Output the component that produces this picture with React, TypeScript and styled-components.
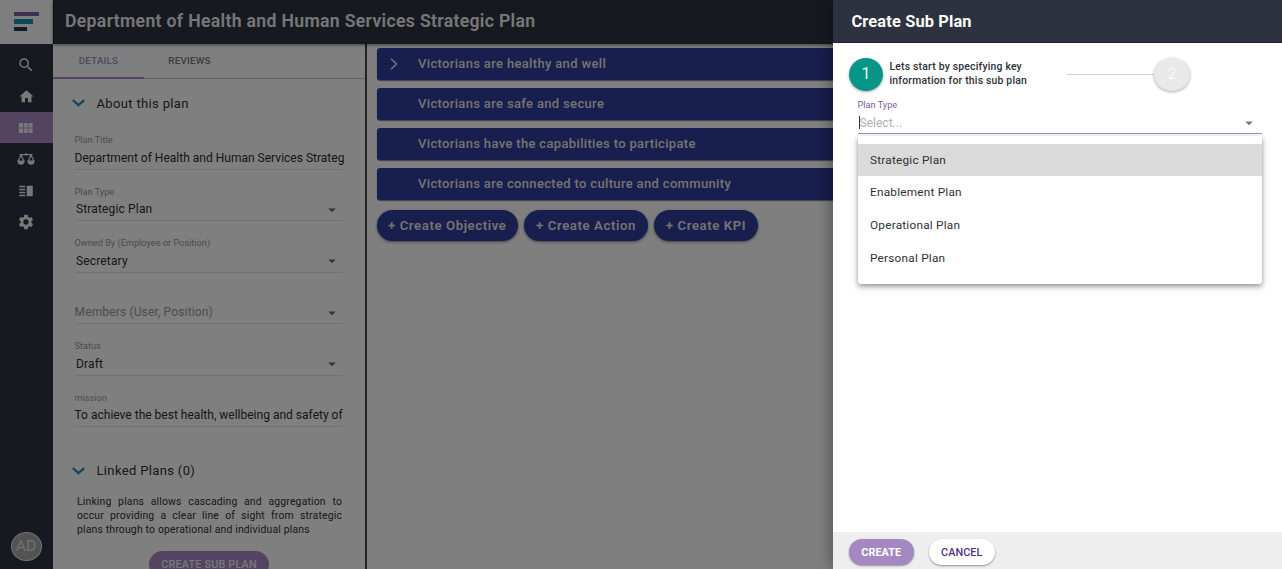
import * as React from 'react';
import { useState } from 'react';
import styled, { createGlobalStyle } from 'styled-components';
import { MdSearch, MdHome, MdSettings, MdVerticalSplit, MdArrowDropDown } from 'react-icons/md';

const GlobalStyle = createGlobalStyle`
  * {
    box-sizing: border-box;
  }
  body {
    margin: 0;
    overflow: hidden;
    font-family: Roboto, "Liberation Sans", sans-serif;
    color: #2f3038;
  }
  button, input {
    font-family: inherit;
  }
`;

const Page = styled.div`
  position: relative;
  display: flex;
  width: 100%;
  height: 100vh;
  overflow: hidden;
  background: #fefefe;
`;

const Sidebar = styled.nav`
  display: flex;
  flex-direction: column;
  flex: none;
  width: 53px;
  background: #2e3342;
`;

const Logo = styled.div`
  display: flex;
  flex-direction: column;
  gap: 3px;
  height: 44px;
  padding: 12px 0 0 14px;
  margin-bottom: 5px;
  background: #fdfdfd;
`;

const LogoBar = styled.span<{ $width: number; $color: string }>`
  width: ${(p) => p.$width}px;
  height: 4.4px;
  background: ${(p) => p.$color};
`;

const NavItem = styled.a<{ $active?: boolean }>`
  display: flex;
  align-items: center;
  justify-content: center;
  height: 31.4px;
  padding: 1px 1px 0 0;
  color: #f0f0f0;
  background: ${(p) => (p.$active ? '#a78bc3' : 'transparent')};
`;

const Avatar = styled.div`
  display: flex;
  align-items: center;
  justify-content: center;
  width: 31px;
  height: 29px;
  margin: auto 0 8.5px 10.5px;
  border: 1px solid #e4e4e4;
  border-radius: 50%;
  background: #a6a6a6;
  color: #e2e2e2;
  font-size: 15.5px;
`;

const Main = styled.div`
  display: flex;
  flex-direction: column;
  flex: 1;
  min-width: 0;
`;

const Header = styled.header`
  z-index: 1;
  flex: none;
  height: 44px;
  padding-left: 11px;
  border-left: 1px solid #1c1f2c;
  background: #2e3342;
  box-shadow: 0 1px 3px rgba(0, 0, 0, 0.5);
  color: #eeeeee;
  font-size: 17.6px;
  font-weight: 600;
  letter-spacing: 0.34px;
  line-height: 43px;
  white-space: nowrap;
`;

const Body = styled.div`
  display: flex;
  flex: 1;
  min-height: 0;
`;

const Details = styled.section`
  flex: none;
  width: 314px;
  overflow: hidden;
  border-right: 2px solid #45464e;
`;

const Tabs = styled.div`
  display: flex;
  height: 35px;
  margin-bottom: 14px;
  border-bottom: 1px solid #c4c4c8;
`;

const Tab = styled.div<{ $active?: boolean }>`
  width: 91px;
  height: 35px;
  border-bottom: 2px solid ${(p) => (p.$active ? '#a78bc3' : 'transparent')};
  color: ${(p) => (p.$active ? '#a78bc3' : '#77777b')};
  font-size: 9.8px;
  font-weight: 500;
  letter-spacing: 0.2px;
  line-height: 34px;
  text-align: center;
`;

const SectionTitle = styled.h2`
  display: flex;
  align-items: center;
  gap: 12px;
  height: 20px;
  margin: 0;
  padding-left: 18.5px;
  font-size: 13px;
  font-weight: 400;
  letter-spacing: 0.35px;
`;

const Form = styled.div`
  padding: 22px 22px 0 21.5px;
  margin-bottom: 16.5px;
`;

const Field = styled.div`
  height: 51.5px;
`;

const FieldLabel = styled.div`
  height: 11px;
  color: #99999c;
  font-size: 9.2px;
  line-height: 10px;
`;

const FieldValue = styled.div<{ $select?: boolean; $muted?: boolean }>`
  display: flex;
  align-items: center;
  justify-content: space-between;
  height: 23.5px;
  padding: 1.5px 2px 0 ${(p) => (p.$select && !p.$muted ? 1.5 : 0)}px;
  border-bottom: 1px solid #e3e3e3;
  color: ${(p) => (p.$muted ? '#99999c' : '#2c2d35')};
  font-size: 12px;
  letter-spacing: ${(p) => (p.$select ? 0.15 : 0.01)}px;
  line-height: 19px;
  white-space: nowrap;
`;

const LinkedText = styled.p`
  margin: 14px 23px 0 24px;
  font-size: 10.4px;
  line-height: 14px;
  letter-spacing: 0.18px;
  text-align: justify;
`;

const SubPlanButton = styled.button`
  display: block;
  width: 120px;
  height: 27px;
  margin: 14px 0 0 96px;
  padding: 0;
  border: none;
  border-radius: 14px;
  background: #a78bc3;
  color: #f0f0f0;
  font-size: 10.8px;
  font-weight: 500;
  letter-spacing: 0.2px;
  white-space: nowrap;
`;

const Objectives = styled.section`
  flex: 1;
  padding: 4px 0 0 9.5px;
`;

const Objective = styled.div`
  display: flex;
  align-items: center;
  height: 32px;
  margin-bottom: 8px;
  padding-bottom: 1px;
  border-radius: 3px;
  background: #303c9b;
  box-shadow: 0 1px 1px rgba(0, 0, 60, 0.5);
  color: #e6e6e6;
  font-size: 13px;
  font-weight: 500;
  letter-spacing: 0.34px;
`;

const Toggle = styled.span`
  display: flex;
  width: 41.5px;
  padding-left: 13px;
`;

const Actions = styled.div`
  display: flex;
  gap: 6px;
  padding-top: 2px;
`;

const ActionButton = styled.button<{ $width: number }>`
  width: ${(p) => p.$width}px;
  height: 31px;
  padding: 0;
  border: none;
  border-radius: 16px;
  background: #303c9b;
  box-shadow: 0 1px 3px rgba(0, 0, 0, 0.5);
  color: #e6e6e6;
  font-size: 13.2px;
  font-weight: 600;
  letter-spacing: 0.58px;
  white-space: nowrap;
`;

const Backdrop = styled.div`
  position: absolute;
  inset: 0;
  z-index: 2;
  background: rgba(0, 0, 0, 0.5);
`;

const Drawer = styled.aside`
  position: absolute;
  top: 0;
  right: 0;
  bottom: 0;
  z-index: 3;
  display: flex;
  flex-direction: column;
  width: 449px;
  background: #fff;
  box-shadow: -2px 0 14px rgba(0, 0, 0, 0.35);
`;

const DrawerHeader = styled.header`
  flex: none;
  height: 43px;
  padding-left: 18.5px;
  border-bottom: 1px solid #1d2147;
  background: #2e323f;
  color: #fff;
  font-size: 16.4px;
  font-weight: 700;
  letter-spacing: 0.14px;
  line-height: 43px;
`;

const DrawerBody = styled.div`
  flex: 1;
  padding: 14.5px 20px 0 16px;
`;

const Steps = styled.div`
  display: flex;
  align-items: center;
  height: 33px;
`;

const StepCircle = styled.div<{ $active?: boolean }>`
  flex: none;
  width: ${(p) => (p.$active ? 34 : 36)}px;
  height: 33px;
  border-radius: 50%;
  background: ${(p) => (p.$active ? '#079588' : '#e9e9e9')};
  box-shadow: 0 1px 3px rgba(0, 0, 0, 0.35);
  color: ${(p) => (p.$active ? '#e8f7f5' : '#f8f8f8')};
  font-size: 16px;
  line-height: 31px;
  text-align: center;
`;

const StepText = styled.div`
  width: 178px;
  padding-left: 6.5px;
  font-size: 10.4px;
  font-weight: 500;
  letter-spacing: 0.2px;
  line-height: 14px;
`;

const StepLine = styled.div`
  width: 87px;
  height: 1px;
  margin-left: 6px;
  background: #cfcfcf;
`;

const Select = styled.div`
  position: relative;
  margin: 7.5px 0 0 8.5px;
`;

const SelectLabel = styled.div`
  color: #7d5ba6;
  font-size: 9.2px;
  line-height: 13px;
`;

const SelectControl = styled.div`
  display: flex;
  align-items: center;
  justify-content: space-between;
  height: 22.5px;
  padding: 2px 4px 0 1px;
  border-bottom: 1.5px solid #a78bc3;
  color: #b0b0b0;
  font-size: 12px;
  letter-spacing: 0.02px;
`;

const Placeholder = styled.span`
  height: 13px;
  border-left: 1px solid #333;
  line-height: 14px;
`;

const Menu = styled.ul`
  position: absolute;
  top: 37.5px;
  left: 0;
  right: 0;
  height: 148px;
  margin: 0;
  padding: 8px 0 0;
  border-radius: 3px;
  background: #fff;
  box-shadow: 0 2px 4px rgba(0, 0, 0, 0.32), 0 3px 10px rgba(0, 0, 0, 0.18);
  list-style: none;
`;

const MenuItem = styled.li<{ $selected: boolean }>`
  height: 32.8px;
  padding-left: 12.5px;
  background: ${(p) => (p.$selected ? '#dadada' : 'transparent')};
  font-size: 11.8px;
  letter-spacing: 0.22px;
  line-height: 32.8px;
  cursor: pointer;
`;

const DrawerFooter = styled.footer`
  display: flex;
  align-items: flex-start;
  gap: 14.5px;
  flex: none;
  height: 37px;
  padding: 7px 0 0 15.5px;
  background: #eeeeee;
`;

const FooterButton = styled.button<{ $primary?: boolean }>`
  width: ${(p) => (p.$primary ? 65.5 : 66.5)}px;
  height: 26px;
  padding: 0;
  border: none;
  border-radius: 13px;
  background: ${(p) => (p.$primary ? '#a388c1' : '#fff')};
  box-shadow: 0 1px 2px rgba(0, 0, 0, 0.4);
  color: ${(p) => (p.$primary ? '#fff' : '#513088')};
  font-size: 10.8px;
  font-weight: ${(p) => (p.$primary ? 700 : 500)};
  letter-spacing: 0.1px;
`;

const fields = [
  { label: 'Plan Title', value: 'Department of Health and Human Services Strateg' },
  { label: 'Plan Type', value: 'Strategic Plan', select: true },
  { label: 'Owned By (Employee or Position)', value: 'Secretary', select: true },
  { label: '', value: 'Members (User, Position)', select: true, muted: true },
  { label: 'Status', value: 'Draft', select: true },
  { label: 'mission', value: 'To achieve the best health, wellbeing and safety of' },
];

const objectives = [
  'Victorians are healthy and well',
  'Victorians are safe and secure',
  'Victorians have the capabilities to participate',
  'Victorians are connected to culture and community',
];

const planTypes = ['Strategic Plan', 'Enablement Plan', 'Operational Plan', 'Personal Plan'];

const ChevronDown = () => (
  <svg width="13" height="8" viewBox="0 0 13 8" fill="none" stroke="#1794b4" strokeWidth="2.3">
    <path d="M0.8 1 6.5 6.2 12.2 1" />
  </svg>
);

const ChevronRight = () => (
  <svg width="8" height="12" viewBox="0 0 8 12" fill="none" stroke="#e6e6e6" strokeWidth="1.5">
    <path d="M1 0.7 6.6 6 1 11.3" />
  </svg>
);

const GridIcon = () => (
  <svg width="14" height="10" viewBox="0 0 14 10" fill="currentColor">
    {[0, 4.8, 9.6].map((x) => (
      <React.Fragment key={x}>
        <rect x={x} y="0" width="4" height="4.6" />
        <rect x={x} y="5.4" width="4" height="4.6" />
      </React.Fragment>
    ))}
  </svg>
);

const ScalesIcon = () => (
  <svg width="18" height="13" viewBox="0 0 18 13" fill="none" stroke="currentColor" strokeWidth="1.2">
    <path d="M2.5 1.6H15.5M9 0V2.6" />
    <path d="M4 2 1.2 8M4 2 6.8 8M14 2 11.2 8M14 2 16.8 8" />
    <path d="M0.3 7.4H7.7C7.7 10.2 6.2 11.8 4 11.8S0.3 10.2 0.3 7.4Z" fill="currentColor" stroke="none" />
    <path d="M10.3 7.4H17.7C17.7 10.2 16.2 11.8 14 11.8S10.3 10.2 10.3 7.4Z" fill="currentColor" stroke="none" />
  </svg>
);

const App: React.FC = () => {
  const [selected, setSelected] = useState('Strategic Plan');

  return (
    <Page>
      <GlobalStyle />
      <Sidebar>
        <Logo>
          <LogoBar $width={25} $color="#8060a8" />
          <LogoBar $width={19} $color="#1794b4" />
          <LogoBar $width={12.5} $color="#2e3342" />
        </Logo>
        <NavItem><MdSearch size={18} /></NavItem>
        <NavItem><MdHome size={17} /></NavItem>
        <NavItem $active><GridIcon /></NavItem>
        <NavItem><ScalesIcon /></NavItem>
        <NavItem><MdVerticalSplit size={18} /></NavItem>
        <NavItem><MdSettings size={18} /></NavItem>
        <Avatar>AD</Avatar>
      </Sidebar>

      <Main>
        <Header>Department of Health and Human Services Strategic Plan</Header>
        <Body>
          <Details>
            <Tabs>
              <Tab $active>DETAILS</Tab>
              <Tab>REVIEWS</Tab>
            </Tabs>
            <SectionTitle>
              <ChevronDown />
              About this plan
            </SectionTitle>
            <Form>
              {fields.map((f) => (
                <Field key={f.value}>
                  <FieldLabel>{f.label}</FieldLabel>
                  <FieldValue $select={f.select} $muted={f.muted}>
                    <span>{f.value}</span>
                    {f.select && <MdArrowDropDown size={18} color="#66666a" />}
                  </FieldValue>
                </Field>
              ))}
            </Form>
            <SectionTitle>
              <ChevronDown />
              Linked Plans (0)
            </SectionTitle>
            <LinkedText>
              Linking plans allows cascading and aggregation to occur providing a clear line of sight
              from strategic plans through to operational and individual plans
            </LinkedText>
            <SubPlanButton>CREATE SUB PLAN</SubPlanButton>
          </Details>

          <Objectives>
            {objectives.map((text, index) => (
              <Objective key={text}>
                <Toggle>{index === 0 && <ChevronRight />}</Toggle>
                {text}
              </Objective>
            ))}
            <Actions>
              <ActionButton $width={141.5}>+ Create Objective</ActionButton>
              <ActionButton $width={124}>+ Create Action</ActionButton>
              <ActionButton $width={104}>+ Create KPI</ActionButton>
            </Actions>
          </Objectives>
        </Body>
      </Main>

      <Backdrop />

      <Drawer>
        <DrawerHeader>Create Sub Plan</DrawerHeader>
        <DrawerBody>
          <Steps>
            <StepCircle $active>1</StepCircle>
            <StepText>
              Lets start by specifying key
              <br />
              information for this sub plan
            </StepText>
            <StepLine />
            <StepCircle>2</StepCircle>
          </Steps>
          <Select>
            <SelectLabel>Plan Type</SelectLabel>
            <SelectControl>
              <Placeholder>Select...</Placeholder>
              <MdArrowDropDown size={18} color="#777" />
            </SelectControl>
            <Menu>
              {planTypes.map((type) => (
                <MenuItem key={type} $selected={type === selected} onClick={() => setSelected(type)}>
                  {type}
                </MenuItem>
              ))}
            </Menu>
          </Select>
        </DrawerBody>
        <DrawerFooter>
          <FooterButton $primary>CREATE</FooterButton>
          <FooterButton>CANCEL</FooterButton>
        </DrawerFooter>
      </Drawer>
    </Page>
  );
};

export default App;
